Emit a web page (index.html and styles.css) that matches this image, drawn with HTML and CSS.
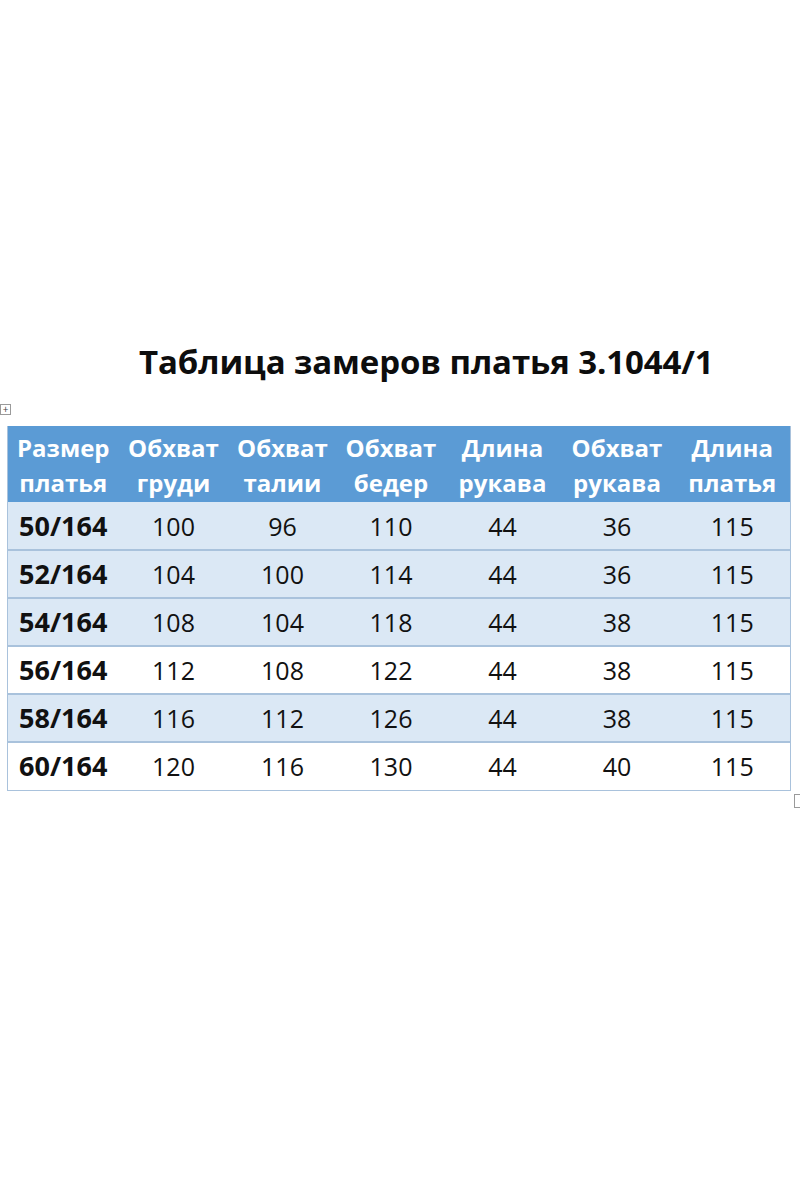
FILE: index.html
```html
<!DOCTYPE html>
<html lang="ru">
<head>
<meta charset="utf-8">
<link rel="stylesheet" href="styles.css">
</head>
<body>
<div class="page">
  <h1 class="title">Таблица замеров платья 3.1044/1</h1>
  <div class="table-wrap">
    <span class="handle-move">+</span>
    <table class="sizes">
      <colgroup>
        <col style="width:111px"><col style="width:110px"><col style="width:108px"><col style="width:109px"><col style="width:114px"><col style="width:115px"><col style="width:116px">
      </colgroup>
      <thead>
        <tr>
          <th>Размер<br>платья</th>
          <th>Обхват<br>груди</th>
          <th>Обхват<br>талии</th>
          <th>Обхват<br>бедер</th>
          <th>Длина<br>рукава</th>
          <th>Обхват<br>рукава</th>
          <th>Длина<br>платья</th>
        </tr>
      </thead>
      <tbody>
        <tr class="shaded"><td class="size">50/164</td><td>100</td><td>96</td><td>110</td><td>44</td><td>36</td><td>115</td></tr>
        <tr class="shaded"><td class="size">52/164</td><td>104</td><td>100</td><td>114</td><td>44</td><td>36</td><td>115</td></tr>
        <tr class="shaded"><td class="size">54/164</td><td>108</td><td>104</td><td>118</td><td>44</td><td>38</td><td>115</td></tr>
        <tr><td class="size">56/164</td><td>112</td><td>108</td><td>122</td><td>44</td><td>38</td><td>115</td></tr>
        <tr class="shaded"><td class="size">58/164</td><td>116</td><td>112</td><td>126</td><td>44</td><td>38</td><td>115</td></tr>
        <tr><td class="size">60/164</td><td>120</td><td>116</td><td>130</td><td>44</td><td>40</td><td>115</td></tr>
      </tbody>
    </table>
    <span class="handle-resize"></span>
  </div>
</div>
</body>
</html>
```

FILE: styles.css
```css
html, body {
  margin: 0;
  padding: 0;
  background: #ffffff;
}

body {
  font-family: "Open Sans", "Liberation Sans", sans-serif;
  color: #111111;
}

.page {
  width: 800px;
  height: 1200px;
  padding-top: 336px;
  box-sizing: border-box;
}

.title {
  margin: 0 0 0 139px;
  font-size: 33px;
  font-weight: 700;
  line-height: 52px;
  color: #0d0d0d;
  letter-spacing: -0.1px;
}

.table-wrap {
  position: relative;
  margin: 38px 0 0 7px;
  width: 784px;
}

.handle-move {
  position: absolute;
  left: -7px;
  top: -22px;
  width: 11px;
  height: 11px;
  border: 1px solid #9a9a9a;
  box-sizing: border-box;
  font-size: 10px;
  line-height: 8px;
  text-align: center;
  color: #444;
  background: #fff;
}

.handle-resize {
  position: absolute;
  right: -13px;
  bottom: -17px;
  width: 10px;
  height: 14px;
  border: 1px solid #9a9a9a;
  border-right: none;
  box-sizing: border-box;
}

.sizes {
  border-collapse: collapse;
  table-layout: fixed;
  width: 784px;
  border: 1px solid #a9c2dc;
  border-top: none;
}

.sizes th {
  background: #5b9bd5;
  color: #ffffff;
  font-size: 24px;
  font-weight: 700;
  line-height: 35px;
  height: 76px;
  padding: 2px 0 0;
  text-align: center;
  vertical-align: middle;
  box-sizing: border-box;
}

.sizes td {
  font-size: 25px;
  line-height: 30px;
  height: 48px;
  padding: 0;
  text-align: center;
  vertical-align: middle;
  border-bottom: 2px solid #a9c2dc;
  box-sizing: border-box;
}

.sizes tbody tr:last-child td {
  border-bottom: none;
}

.sizes tr.shaded td {
  background: #dbe8f5;
}

.sizes td.size {
  font-weight: 700;
  font-size: 27px;
}
```
